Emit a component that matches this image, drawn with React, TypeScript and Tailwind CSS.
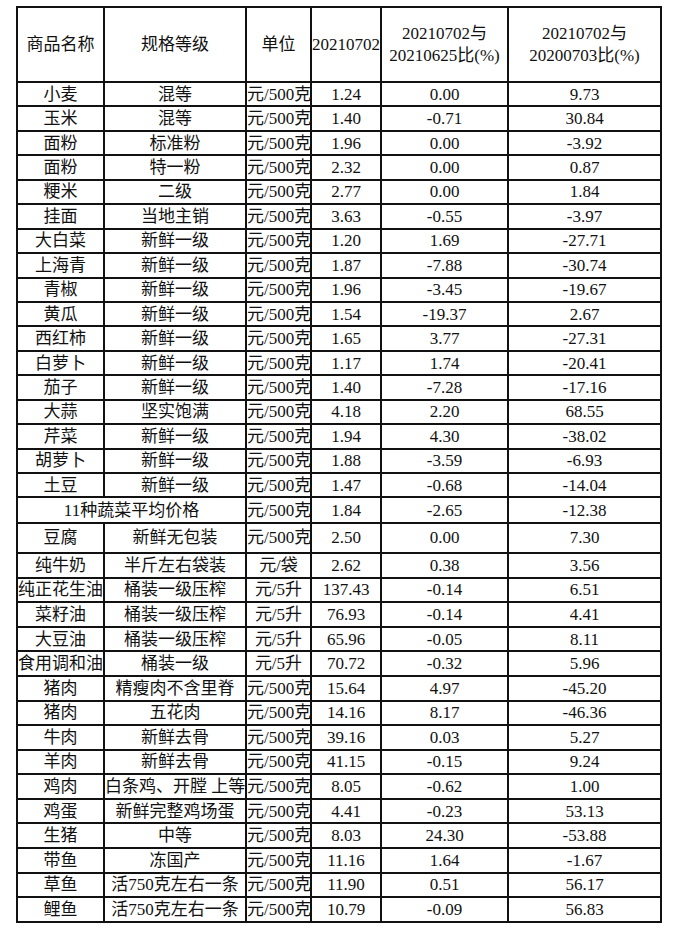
import React from "react";

type Row = [string, string, string, string, string, string];

const rowsA: Row[] = [
  ["小麦", "混等", "元/500克", "1.24", "0.00", "9.73"],
  ["玉米", "混等", "元/500克", "1.40", "-0.71", "30.84"],
  ["面粉", "标准粉", "元/500克", "1.96", "0.00", "-3.92"],
  ["面粉", "特一粉", "元/500克", "2.32", "0.00", "0.87"],
  ["粳米", "二级", "元/500克", "2.77", "0.00", "1.84"],
  ["挂面", "当地主销", "元/500克", "3.63", "-0.55", "-3.97"],
  ["大白菜", "新鲜一级", "元/500克", "1.20", "1.69", "-27.71"],
  ["上海青", "新鲜一级", "元/500克", "1.87", "-7.88", "-30.74"],
  ["青椒", "新鲜一级", "元/500克", "1.96", "-3.45", "-19.67"],
  ["黄瓜", "新鲜一级", "元/500克", "1.54", "-19.37", "2.67"],
  ["西红柿", "新鲜一级", "元/500克", "1.65", "3.77", "-27.31"],
  ["白萝卜", "新鲜一级", "元/500克", "1.17", "1.74", "-20.41"],
  ["茄子", "新鲜一级", "元/500克", "1.40", "-7.28", "-17.16"],
  ["大蒜", "坚实饱满", "元/500克", "4.18", "2.20", "68.55"],
  ["芹菜", "新鲜一级", "元/500克", "1.94", "4.30", "-38.02"],
  ["胡萝卜", "新鲜一级", "元/500克", "1.88", "-3.59", "-6.93"],
  ["土豆", "新鲜一级", "元/500克", "1.47", "-0.68", "-14.04"],
];

const rowsB: Row[] = [
  ["纯牛奶", "半斤左右袋装", "元/袋", "2.62", "0.38", "3.56"],
  ["纯正花生油", "桶装一级压榨", "元/5升", "137.43", "-0.14", "6.51"],
  ["菜籽油", "桶装一级压榨", "元/5升", "76.93", "-0.14", "4.41"],
  ["大豆油", "桶装一级压榨", "元/5升", "65.96", "-0.05", "8.11"],
  ["食用调和油", "桶装一级", "元/5升", "70.72", "-0.32", "5.96"],
  ["猪肉", "精瘦肉不含里脊", "元/500克", "15.64", "4.97", "-45.20"],
  ["猪肉", "五花肉", "元/500克", "14.16", "8.17", "-46.36"],
  ["牛肉", "新鲜去骨", "元/500克", "39.16", "0.03", "5.27"],
  ["羊肉", "新鲜去骨", "元/500克", "41.15", "-0.15", "9.24"],
  ["鸡肉", "白条鸡、开膛 上等", "元/500克", "8.05", "-0.62", "1.00"],
  ["鸡蛋", "新鲜完整鸡场蛋", "元/500克", "4.41", "-0.23", "53.13"],
  ["生猪", "中等", "元/500克", "8.03", "24.30", "-53.88"],
  ["带鱼", "冻国产", "元/500克", "11.16", "1.64", "-1.67"],
  ["草鱼", "活750克左右一条", "元/500克", "11.90", "0.51", "56.17"],
  ["鲤鱼", "活750克左右一条", "元/500克", "10.79", "-0.09", "56.83"],
];

const cell =
  "border-2 border-[#111] text-center align-middle p-0 whitespace-nowrap overflow-visible leading-none";

function DataRow({ r, h }: { r: Row; h: string }) {
  return (
    <tr className={h}>
      {r.map((v, i) => (
        <td key={i} className={cell}>
          {v}
        </td>
      ))}
    </tr>
  );
}

export default function App() {
  return (
    <div className="w-[673px] h-[937px] bg-white pl-[16px] pt-[6px]">
      <table
        className="table-fixed border-collapse text-[17px] text-[#111] w-[644px]"
        style={{ fontFamily: '"Liberation Serif", "Noto Sans CJK SC", serif' }}
      >
        <colgroup>
          <col className="w-[87px]" />
          <col className="w-[142px]" />
          <col className="w-[65px]" />
          <col className="w-[70px]" />
          <col className="w-[127px]" />
          <col className="w-[153px]" />
        </colgroup>
        <tbody>
          <tr className="h-[75px]">
            <td className={cell}>商品名称</td>
            <td className={cell}>规格等级</td>
            <td className={cell}>单位</td>
            <td className={cell}>20210702</td>
            <td className="border-2 border-[#111] text-center align-middle p-0 leading-[22px]">
              20210702与
              <br />
              20210625比(%)
            </td>
            <td className="border-2 border-[#111] text-center align-middle p-0 leading-[22px]">
              20210702与
              <br />
              20200703比(%)
            </td>
          </tr>
          {rowsA.map((r, i) => (
            <DataRow key={i} r={r} h="h-[24.45px]" />
          ))}
          <tr className="h-[25.5px]">
            <td colSpan={2} className={cell}>
              11种蔬菜平均价格
            </td>
            <td className={cell}>元/500克</td>
            <td className={cell}>1.84</td>
            <td className={cell}>-2.65</td>
            <td className={cell}>-12.38</td>
          </tr>
          <DataRow r={["豆腐", "新鲜无包装", "元/500克", "2.50", "0.00", "7.30"]} h="h-[30px]" />
          {rowsB.map((r, i) => (
            <DataRow key={i} r={r} h="h-[24.6px]" />
          ))}
        </tbody>
      </table>
    </div>
  );
}
